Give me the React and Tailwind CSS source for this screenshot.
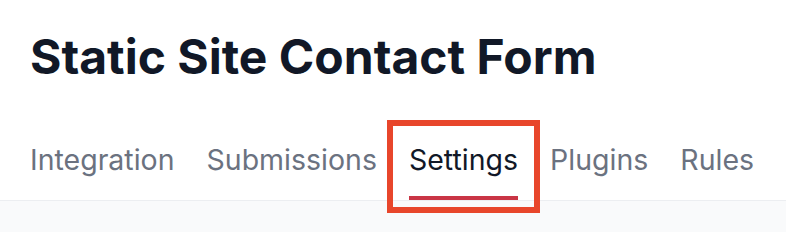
import React from 'react';

const tabs = ['Integration', 'Submissions', 'Settings', 'Plugins', 'Rules'];

export default function App() {
  const active = 'Settings';

  return (
    <div className="w-[786px] h-[232px] bg-white overflow-hidden font-['Inter',sans-serif]">
      <div className="pl-[30px] pt-[33px]">
        <h1 className="text-[48px] leading-[48px] font-bold text-[#111827]">
          Static Site Contact Form
        </h1>

        {/* tab nav */}
        <nav className="mt-[65px] flex gap-[32px]">
          {tabs.map((tab) => (
            <div key={tab} className="relative">
              <div
                className={`text-[28.5px] leading-[28px] pb-[22px] border-b-4 ${
                  tab === active
                    ? 'text-[#111827] border-[#c93545]'
                    : 'text-[#6b7280] border-transparent'
                }`}
              >
                {tab}
              </div>
              {/* highlight annotation */}
              {tab === active && (
                <div className="absolute left-[-22px] right-[-22px] top-[-26px] bottom-[-13px] border-[6px] border-[#e8462b]" />
              )}
            </div>
          ))}
        </nav>
      </div>

      <div className="h-full bg-[#f9fafb] border-t border-[#eceef1]" />
    </div>
  );
}
